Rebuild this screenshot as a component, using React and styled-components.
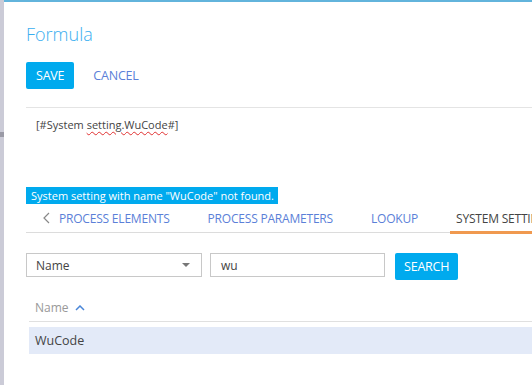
import React from "react";
import styled, { createGlobalStyle } from "styled-components";

const Global = createGlobalStyle`
  html, body {
    margin: 0;
    padding: 0;
    background: #fff;
    overflow: hidden;
  }
  body {
    font-family: "Open Sans", "Liberation Sans", sans-serif;
    color: #444;
  }
`;

const Page = styled.div`
  display: flex;
  width: 532px;
  height: 385px;
  overflow: hidden;
`;

const Strip = styled.div`
  flex: 0 0 4px;
  background: #cbcbd7;
  padding-top: 132px;
  box-sizing: border-box;
`;

const Handle = styled.div`
  width: 4px;
  height: 5px;
  background: #9a9aa6;
`;

const Panel = styled.div`
  flex: 0 0 700px;
  border-top: 2px solid #62b4dc;
  padding-left: 22px;
  box-sizing: border-box;
`;

const Title = styled.h1`
  margin: 19px 0 0;
  font-size: 18px;
  line-height: 26px;
  font-weight: 300;
  color: #39aef0;
`;

const Toolbar = styled.div`
  display: flex;
  align-items: center;
  gap: 19px;
  margin-top: 15px;
  padding-bottom: 18px;
  border-bottom: 1px solid #e4e4e4;
`;

const Button = styled.button`
  height: ${(p) => p.$h || 27}px;
  padding: 0 ${(p) => p.$px || 10}px;
  border: none;
  border-radius: 2px;
  background: #00aaee;
  color: #fff;
  font-family: inherit;
  font-size: 12.5px;
  letter-spacing: -0.2px;
  cursor: pointer;
`;

const LinkButton = styled.span`
  font-size: 12.5px;
  letter-spacing: -0.2px;
  color: #5b7fd8;
`;

const Editor = styled.div`
  height: 79px;
  padding: 9px 0 0 10px;
  box-sizing: border-box;
  font-size: 11px;
  color: #444;
`;

const Misspelled = styled.span`
  text-decoration: underline wavy #e03030;
  text-decoration-thickness: 1px;
  text-underline-offset: 2px;
`;

const ErrorTip = styled.div`
  width: fit-content;
  background: #00aaee;
  color: #fff;
  font-size: 11px;
  line-height: 17px;
  padding: 0 4px 0 5px;
`;

const Tabs = styled.div`
  display: flex;
  align-items: stretch;
  height: 28px;
  border-bottom: 1px solid #dcdcdc;
`;

const Chevron = styled.span`
  display: flex;
  align-items: center;
  padding: 0 9px 0 17px;
`;

const Tab = styled.div`
  display: flex;
  align-items: center;
  padding: 0 38px 0 0;
  font-size: 12px;
  letter-spacing: -0.2px;
  color: ${(p) => (p.$active ? "#444" : "#5b7fd8")};
  position: relative;
  white-space: nowrap;
  ${(p) =>
    p.$active &&
    `
    padding-left: 6px;
    margin-left: -6px;
    &::after {
      content: "";
      position: absolute;
      left: 0;
      right: 0;
      bottom: -2px;
      height: 3px;
      background: #f0994f;
    }
  `}
`;

const Filters = styled.div`
  display: flex;
  align-items: flex-start;
  gap: 8px;
  margin-top: 20px;
`;

const Field = styled.div`
  display: flex;
  align-items: center;
  justify-content: space-between;
  width: ${(p) => p.$w}px;
  height: 24px;
  border: 1px solid #c8c8c8;
  box-sizing: border-box;
  padding: 0 10px 0 ${(p) => p.$pl || 9}px;
  font-size: 12px;
  color: #444;
`;

const Caret = styled.span`
  width: 0;
  height: 0;
  border-left: 4px solid transparent;
  border-right: 4px solid transparent;
  border-top: 4px solid #777;
  margin-right: 1px;
`;

const Grid = styled.div`
  margin: 14px 0 0 3px;
`;

const GridHead = styled.div`
  display: flex;
  align-items: center;
  gap: 6px;
  height: 27px;
  padding: 0 0 0 6px;
  border-bottom: 1px solid #e0e0e0;
  font-size: 12px;
  color: #999;
`;

const GridRow = styled.div`
  display: flex;
  align-items: center;
  height: 27px;
  margin-top: 5px;
  padding-left: 6px;
  background: #e3eaf8;
  font-size: 12.5px;
  color: #444;
`;

export default function App() {
  return (
    <>
      <Global />
      <Page>
        <Strip>
          <Handle />
        </Strip>
        <Panel>
          <Title>Formula</Title>
          <Toolbar>
            <Button $px={10}>SAVE</Button>
            <LinkButton>CANCEL</LinkButton>
          </Toolbar>
          <Editor>
            [#System <Misspelled>setting.WuCode</Misspelled>#]
          </Editor>
          <ErrorTip>System setting with name "WuCode" not found.</ErrorTip>
          <Tabs>
            <Chevron>
              <svg width="7" height="12" viewBox="0 0 7 12">
                <path d="M6 1 L1 6 L6 11" fill="none" stroke="#888" strokeWidth="1.2" />
              </svg>
            </Chevron>
            <Tab>PROCESS ELEMENTS</Tab>
            <Tab>PROCESS PARAMETERS</Tab>
            <Tab>LOOKUP</Tab>
            <Tab $active>SYSTEM SETTINGS</Tab>
          </Tabs>
          <Filters>
            <Field $w={176}>
              <span>Name</span>
              <Caret />
            </Field>
            <Field $w={175} $pl={10}>
              <span>wu</span>
            </Field>
            <Button $px={9} style={{ marginLeft: 2 }}>SEARCH</Button>
          </Filters>
          <Grid>
            <GridHead>
              <span>Name</span>
              <svg width="10" height="6" viewBox="0 0 10 6">
                <path d="M1 5 L5 1 L9 5" fill="none" stroke="#4a86d8" strokeWidth="1.5" />
              </svg>
            </GridHead>
            <GridRow>WuCode</GridRow>
          </Grid>
        </Panel>
      </Page>
    </>
  );
}
